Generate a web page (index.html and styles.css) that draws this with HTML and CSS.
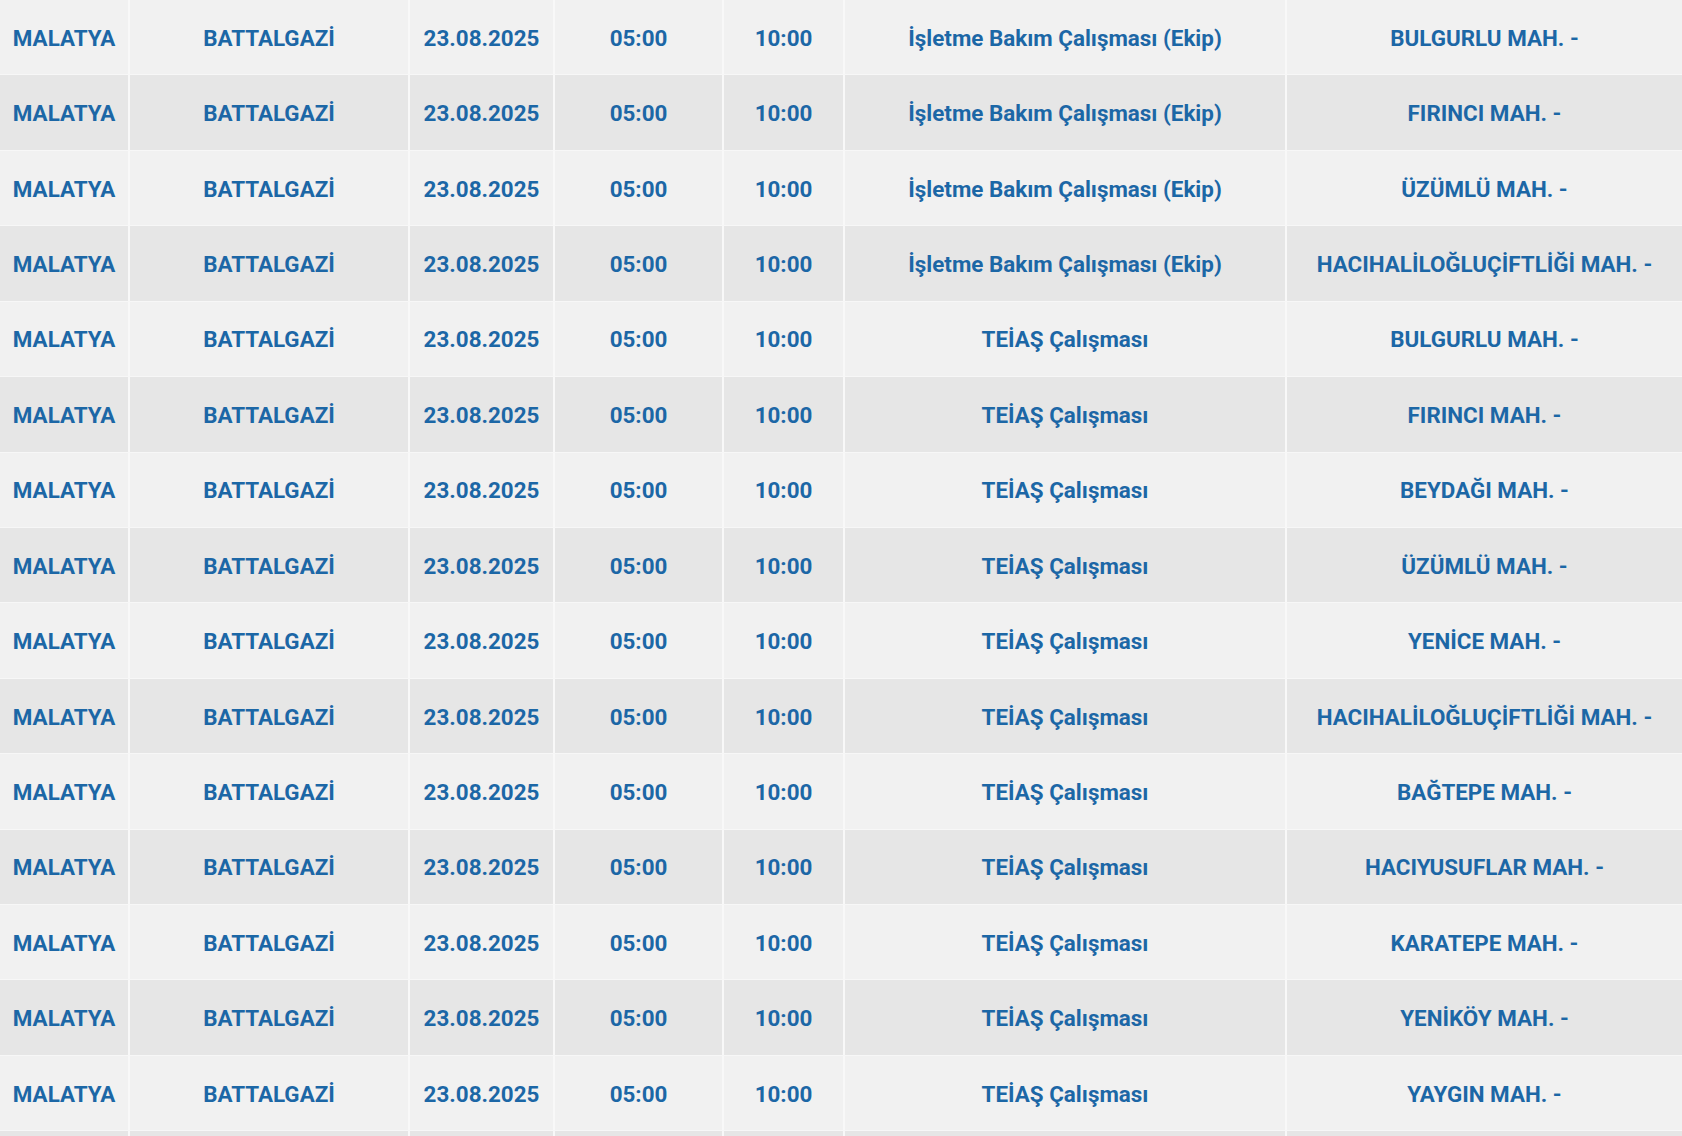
FILE: index.html
```html
<!DOCTYPE html>
<html lang="tr">
<head>
<meta charset="utf-8">
<title>Kesinti Listesi</title>
<link rel="stylesheet" href="styles.css">
</head>
<body>
<div class="table">
  <div class="row"><div class="cell">MALATYA</div><div class="cell">BATTALGAZİ</div><div class="cell">23.08.2025</div><div class="cell">05:00</div><div class="cell">10:00</div><div class="cell">İşletme Bakım Çalışması (Ekip)</div><div class="cell">BULGURLU MAH. -</div></div>
  <div class="row"><div class="cell">MALATYA</div><div class="cell">BATTALGAZİ</div><div class="cell">23.08.2025</div><div class="cell">05:00</div><div class="cell">10:00</div><div class="cell">İşletme Bakım Çalışması (Ekip)</div><div class="cell">FIRINCI MAH. -</div></div>
  <div class="row"><div class="cell">MALATYA</div><div class="cell">BATTALGAZİ</div><div class="cell">23.08.2025</div><div class="cell">05:00</div><div class="cell">10:00</div><div class="cell">İşletme Bakım Çalışması (Ekip)</div><div class="cell">ÜZÜMLÜ MAH. -</div></div>
  <div class="row"><div class="cell">MALATYA</div><div class="cell">BATTALGAZİ</div><div class="cell">23.08.2025</div><div class="cell">05:00</div><div class="cell">10:00</div><div class="cell">İşletme Bakım Çalışması (Ekip)</div><div class="cell">HACIHALİLOĞLUÇİFTLİĞİ MAH. -</div></div>
  <div class="row"><div class="cell">MALATYA</div><div class="cell">BATTALGAZİ</div><div class="cell">23.08.2025</div><div class="cell">05:00</div><div class="cell">10:00</div><div class="cell">TEİAŞ Çalışması</div><div class="cell">BULGURLU MAH. -</div></div>
  <div class="row"><div class="cell">MALATYA</div><div class="cell">BATTALGAZİ</div><div class="cell">23.08.2025</div><div class="cell">05:00</div><div class="cell">10:00</div><div class="cell">TEİAŞ Çalışması</div><div class="cell">FIRINCI MAH. -</div></div>
  <div class="row"><div class="cell">MALATYA</div><div class="cell">BATTALGAZİ</div><div class="cell">23.08.2025</div><div class="cell">05:00</div><div class="cell">10:00</div><div class="cell">TEİAŞ Çalışması</div><div class="cell">BEYDAĞI MAH. -</div></div>
  <div class="row"><div class="cell">MALATYA</div><div class="cell">BATTALGAZİ</div><div class="cell">23.08.2025</div><div class="cell">05:00</div><div class="cell">10:00</div><div class="cell">TEİAŞ Çalışması</div><div class="cell">ÜZÜMLÜ MAH. -</div></div>
  <div class="row"><div class="cell">MALATYA</div><div class="cell">BATTALGAZİ</div><div class="cell">23.08.2025</div><div class="cell">05:00</div><div class="cell">10:00</div><div class="cell">TEİAŞ Çalışması</div><div class="cell">YENİCE MAH. -</div></div>
  <div class="row"><div class="cell">MALATYA</div><div class="cell">BATTALGAZİ</div><div class="cell">23.08.2025</div><div class="cell">05:00</div><div class="cell">10:00</div><div class="cell">TEİAŞ Çalışması</div><div class="cell">HACIHALİLOĞLUÇİFTLİĞİ MAH. -</div></div>
  <div class="row"><div class="cell">MALATYA</div><div class="cell">BATTALGAZİ</div><div class="cell">23.08.2025</div><div class="cell">05:00</div><div class="cell">10:00</div><div class="cell">TEİAŞ Çalışması</div><div class="cell">BAĞTEPE MAH. -</div></div>
  <div class="row"><div class="cell">MALATYA</div><div class="cell">BATTALGAZİ</div><div class="cell">23.08.2025</div><div class="cell">05:00</div><div class="cell">10:00</div><div class="cell">TEİAŞ Çalışması</div><div class="cell">HACIYUSUFLAR MAH. -</div></div>
  <div class="row"><div class="cell">MALATYA</div><div class="cell">BATTALGAZİ</div><div class="cell">23.08.2025</div><div class="cell">05:00</div><div class="cell">10:00</div><div class="cell">TEİAŞ Çalışması</div><div class="cell">KARATEPE MAH. -</div></div>
  <div class="row"><div class="cell">MALATYA</div><div class="cell">BATTALGAZİ</div><div class="cell">23.08.2025</div><div class="cell">05:00</div><div class="cell">10:00</div><div class="cell">TEİAŞ Çalışması</div><div class="cell">YENİKÖY MAH. -</div></div>
  <div class="row"><div class="cell">MALATYA</div><div class="cell">BATTALGAZİ</div><div class="cell">23.08.2025</div><div class="cell">05:00</div><div class="cell">10:00</div><div class="cell">TEİAŞ Çalışması</div><div class="cell">YAYGIN MAH. -</div></div>
  <div class="row"><div class="cell"></div><div class="cell"></div><div class="cell"></div><div class="cell"></div><div class="cell"></div><div class="cell"></div><div class="cell"></div></div>
</div>
</body>
</html>
```

FILE: styles.css
```css
html, body {
  margin: 0;
  padding: 0;
  background: #f8f8f8;
  overflow: hidden;
}
.table {
  display: flex;
  flex-direction: column;
  width: 1682px;
  font-family: Roboto, "Liberation Sans", sans-serif;
  font-weight: 700;
  font-size: 22.4px;
  color: #1c67a6;
}
.row {
  display: grid;
  grid-template-columns: 128px 280px 145px 169px 121px 442px 1fr;
  height: 75.43px;
  box-sizing: border-box;
  border-bottom: 1px solid #f7f7f7;
  background: #f1f1f1;
}
.row:nth-child(even) {
  background: #e6e6e6;
}
.cell {
  display: flex;
  align-items: center;
  justify-content: center;
  white-space: nowrap;
  box-sizing: border-box;
  padding-top: 1px;
  border-left: 2px solid #f8f8f8;
}
.cell:first-child {
  border-left: none;
}
```
